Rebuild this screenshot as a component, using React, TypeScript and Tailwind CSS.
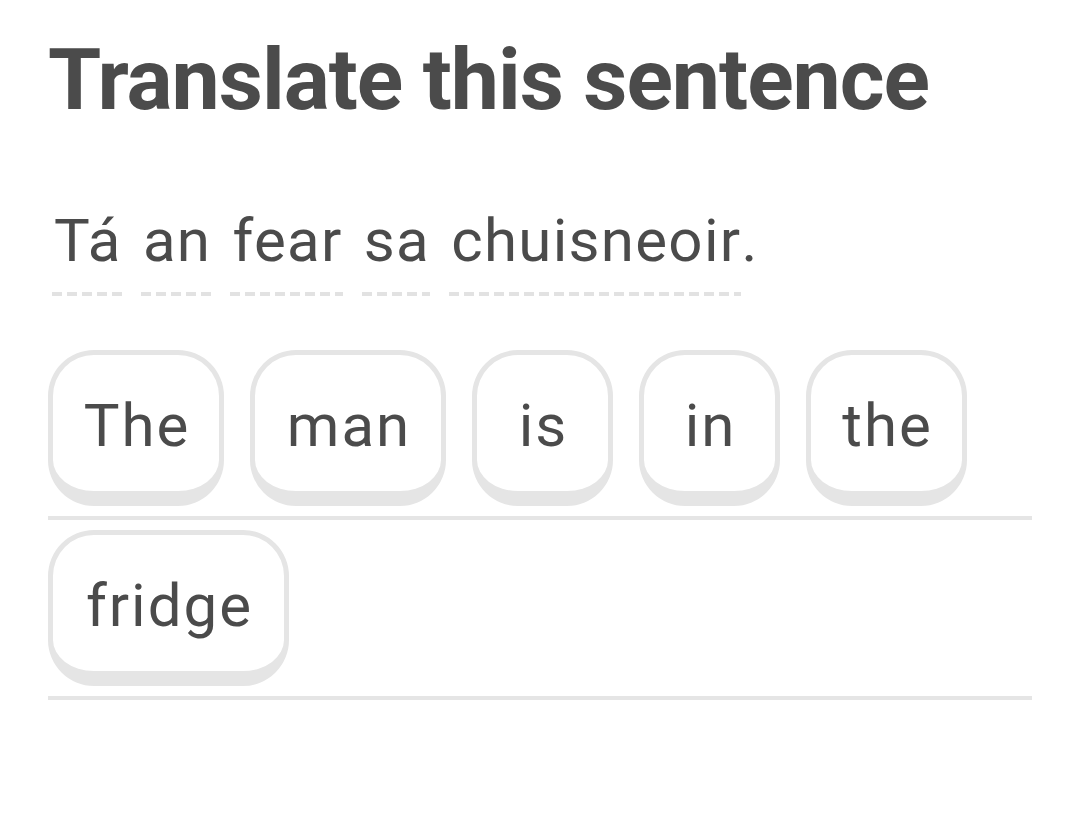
import React from "react";

const font = { fontFamily: "Roboto, 'Noto Sans', sans-serif" };

function Tile({ word, w }: { word: string; w: string }) {
  return (
    <div className={`${w} h-[156px] rounded-[46px] border-[5px] border-b-[15px] border-[#e5e5e5] bg-white flex items-center justify-center text-[60px] text-[#4b4b4b] leading-none tracking-[2px]`}>
      <span className="mt-[5px] pl-[2px]">{word}</span>
    </div>
  );
}

function Word({ w }: { w: string }) {
  return (
    <span className="relative inline-block">
      {w}
      <span className="absolute left-[-2px] right-[0px] top-[86px] h-[4px] bg-[repeating-linear-gradient(90deg,#e2e2e2_0_10px,transparent_10px_15px)]" />
    </span>
  );
}

export default function App() {
  const words = ["Tá", "an", "fear", "sa", "chuisneoir"];
  const row1: [string, string][] = [
    ["The", "w-[176px]"],
    ["man", "w-[196px]"],
    ["is", "w-[141px]"],
    ["in", "w-[141px]"],
    ["the", "w-[161px]"],
  ];
  return (
    <div className="w-[1080px] h-[838px] bg-white px-[48px] pt-[30px]" style={font}>
      <h1 className="text-[86px] font-bold text-[#4b4b4b] leading-[100px] tracking-[-1px]">
        Translate this sentence
      </h1>
      <div className="mt-[76px] pl-[6px] text-[60px] text-[#4b4b4b] leading-[70px] tracking-[1.3px] [word-spacing:5px]">
        {words.map((w, i) => (
          <React.Fragment key={i}>
            <Word w={w} />
            {i < words.length - 1 ? " " : "."}
          </React.Fragment>
        ))}
      </div>
      <div className="mt-[64px]">
        <div className="flex gap-[26px] pt-[10px] pb-[10px] border-b-[4px] border-[#e5e5e5]">
          {row1.map(([word, w], i) => (
            <Tile key={i} word={word} w={w} />
          ))}
        </div>
        <div className="flex gap-[26px] pt-[10px] pb-[10px] border-b-[4px] border-[#e5e5e5]">
          <Tile word="fridge" w="w-[241px]" />
        </div>
      </div>
    </div>
  );
}
